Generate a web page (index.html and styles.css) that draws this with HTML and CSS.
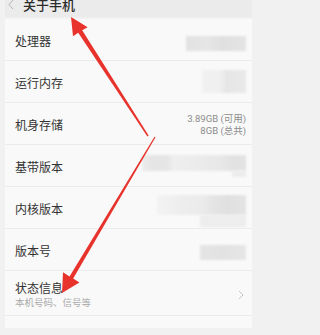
FILE: index.html
```html
<!DOCTYPE html>
<html lang="zh">
<head>
<meta charset="utf-8">
<link rel="stylesheet" href="styles.css">
</head>
<body>
<div class="screen">
  <div class="header">
    <svg class="back" width="8" height="10" viewBox="0 0 8 10"><polyline points="6,0 2,4.5 6,9" fill="none" stroke="#b5b5b5" stroke-width="1"/></svg>
    <span class="title">关于手机</span>
  </div>
  <div class="card">
    <div class="row">
      <span class="label">处理器</span>
      <div class="ph ph1"></div>
    </div>
    <div class="row">
      <span class="label">运行内存</span>
      <div class="ph ph2"></div>
    </div>
    <div class="row">
      <span class="label">机身存储</span>
      <div class="value"><div>3.89GB (可用)</div><div>8GB (总共)</div></div>
    </div>
    <div class="row">
      <span class="label">基带版本</span>
      <div class="phcol ph4col"><div class="ph ph4a"></div><div class="ph ph4b"></div></div>
    </div>
    <div class="row">
      <span class="label">内核版本</span>
      <div class="phcol ph5col"><div class="ph ph5a"></div><div class="ph ph5b"></div></div>
    </div>
    <div class="row">
      <span class="label">版本号</span>
      <div class="ph ph6"></div>
    </div>
    <div class="row status">
      <div class="stack">
        <span class="label slabel">状态信息</span>
        <span class="sub">本机号码、信号等</span>
      </div>
      <svg class="chev" width="6" height="10" viewBox="0 0 6 10"><polyline points="1,1 5,5 1,9" fill="none" stroke="#c4c4c4" stroke-width="1"/></svg>
    </div>
    <div class="tail"></div>
  </div>
</div>
<svg class="arrows" width="258" height="335" viewBox="0 0 258 335">
  <polygon fill="#e8332c" points="71,17 87.6,27.2 82.2,30.2 148.6,135.6 147.4,136.4 78.2,32.7 73,36.3"/>
  <polygon fill="#e8332c" points="62,293 79.4,282.5 73.2,278.6 155.5,137.3 154.5,136.7 69.5,276.4 63,272.3"/>
</svg>
</body>
</html>
```
FILE: styles.css
```css
html, body {
  margin: 0;
  padding: 0;
}
body {
  width: 258px;
  height: 335px;
  overflow: hidden;
  background: #f1f1f1;
  font-family: "Noto Sans CJK SC", "Noto Sans", sans-serif;
  color: #333;
}
.screen {
  margin: 0 6px 0 5px;
}
.header {
  height: 17px;
  background: #ebebeb;
  display: flex;
  align-items: flex-start;
}
.back {
  margin: 0 0 0 2px;
}
.title {
  font-size: 13px;
  line-height: 13px;
  margin: -2px 0 0 8px;
  font-weight: 500;
  color: #2c2c2c;
}
.card {
  margin-top: 2px;
  background: #f9f9f9;
}
.row {
  height: 39px;
  padding: 2px 6px 0 10px;
  border-bottom: 1px solid #ececec;
  display: flex;
  align-items: center;
  justify-content: space-between;
}
.label {
  font-size: 12px;
  line-height: 14px;
  color: #333;
}
.value {
  font-family: "Roboto", "Noto Sans CJK SC", sans-serif;
  font-size: 9.5px;
  line-height: 12px;
  color: #8c8c8c;
  text-align: right;
}
.ph {
  filter: blur(1px);
}
.ph1 {
  width: 60px;
  height: 15px;
  margin-top: 6px;
  background: linear-gradient(to right, #e2e2e2 0, #e6e6e6 35%, #e0e0e0 60%, #e4e4e4 100%);
}
.ph2 {
  width: 44px;
  height: 23px;
  margin-top: -2px;
  background: linear-gradient(to right, #f1f1f1 0, #f0f0f0 40%, #e6e6e6 55%, #e9e9e9 100%);
}
.phcol {
  display: flex;
  flex-direction: column;
  align-items: flex-end;
}
.ph4col {
  margin-top: -1px;
}
.ph4a {
  width: 104px;
  height: 16px;
  background: linear-gradient(to right, #ececec 0, #e5e5e5 10%, #e6e6e6 25%, #efefef 30%, #ebebeb 55%, #e8e8e8 75%, #e2e2e2 88%, #e3e3e3 100%);
}
.ph4b {
  width: 14px;
  height: 6px;
  background: #ececec;
}
.ph5col {
  margin-top: 5px;
}
.ph5a {
  width: 89px;
  height: 20px;
  background: linear-gradient(to right, #f3f3f3 0, #eeeeee 25%, #ebebeb 50%, #e4e4e4 65%, #e0e0e0 80%, #e4e4e4 100%);
}
.ph5b {
  width: 46px;
  height: 12px;
  background: #ededed;
}
.ph6 {
  width: 46px;
  height: 15px;
  margin-top: 4px;
  background: linear-gradient(to right, #e5e5e5 0, #e2e2e2 50%, #e6e6e6 100%);
}
.row.status {
  height: auto;
  padding: 10px 8px 7px 10px;
}
.stack {
  display: flex;
  flex-direction: column;
}
.slabel {
  line-height: 13px;
}
.sub {
  font-size: 9.5px;
  line-height: 12px;
  margin-top: 2px;
  color: #aaaaaa;
}
.tail {
  height: 12px;
}
.arrows {
  position: absolute;
  left: 0;
  top: 0;
  pointer-events: none;
}
```
